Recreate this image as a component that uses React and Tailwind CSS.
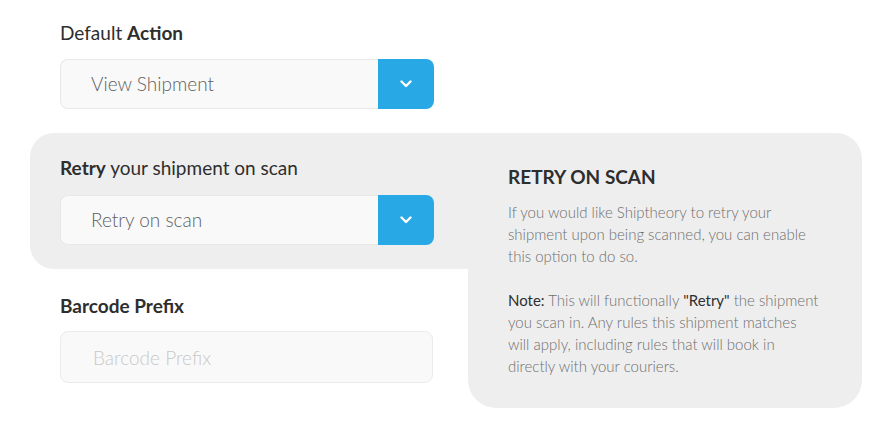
import { useState } from "react";

const FONT = "font-['Lato','Open_Sans',sans-serif]";

function Chevron() {
  return (
    <svg width="12" height="8" viewBox="0 0 12 8" fill="none">
      <path d="M1.5 1.5L6 6L10.5 1.5" stroke="white" strokeWidth="2.4" strokeLinecap="round" strokeLinejoin="round" />
    </svg>
  );
}

function SelectBox({ value }) {
  return (
    <div className="flex h-[50px] w-[374px]">
      <div className="flex flex-1 items-center rounded-l-[8px] border border-r-0 border-[#e8e8e8] bg-[#f9f9f9] pl-[30px] text-[19px] font-light text-[#5f5f5f]">
        {value}
      </div>
      <button
        type="button"
        className="flex w-[56px] items-center justify-center rounded-r-[8px] bg-[#29a8e6]"
      >
        <Chevron />
      </button>
    </div>
  );
}

export default function App() {
  const [prefix, setPrefix] = useState("");

  return (
    <div className={`relative h-[421px] w-[884px] overflow-hidden bg-white ${FONT}`}>
      <div className="pl-[60px] pt-[21px]">
        <label className="block text-[19px] leading-[24px] text-[#2e2e2e]">
          Default <span className="font-bold">Action</span>
        </label>
        <div className="mt-[14px]">
          <SelectBox value="View Shipment" />
        </div>
      </div>

      <div className="ml-[30px] mt-[24px] w-[438px] rounded-l-[24px] bg-[#eeeeee] pb-[24px] pl-[30px] pt-[23px]">
        <label className="block text-[19px] leading-[24px] text-[#2e2e2e]">
          <span className="font-bold">Retry</span> your shipment on scan
        </label>
        <div className="mt-[15px]">
          <SelectBox value="Retry on scan" />
        </div>
      </div>

      <div className="pl-[60px] pt-[25px]">
        <label className="block text-[19px] font-bold leading-[24px] text-[#2e2e2e]">
          Barcode Prefix
        </label>
        <input
          value={prefix}
          onChange={(e) => setPrefix(e.target.value)}
          placeholder="Barcode Prefix"
          className="mt-[13px] h-[52px] w-[373px] rounded-[8px] border border-[#ebebeb] bg-[#f9f9f9] pl-[32px] text-[19px] font-light text-[#5f5f5f] outline-none placeholder:text-[#c9c9c9]"
        />
      </div>

      <div className="absolute left-[468px] top-[133px] h-[275px] w-[394px] rounded-tr-[26px] rounded-b-[28px] bg-[#eeeeee] pl-[40px] pr-[30px] pt-[32px]">
        <h4 className="text-[19px] font-bold leading-[24px] text-[#2e2e2e]">RETRY ON SCAN</h4>
        <p className="mt-[12px] text-[15px] font-light leading-[22px] text-[#6e6e6e]">
          If you would like Shiptheory to retry your
          <br />
          shipment upon being scanned, you can enable
          <br />
          this option to do so.
          <br />
          <br />
          <span className="font-normal text-[#2e2e2e]">Note:</span> This will functionally{" "}
          <span className="font-normal text-[#2e2e2e]">"Retry"</span> the shipment
          <br />
          you scan in. Any rules this shipment matches
          <br />
          will apply, including rules that will book in
          <br />
          directly with your couriers.
        </p>
      </div>
    </div>
  );
}
